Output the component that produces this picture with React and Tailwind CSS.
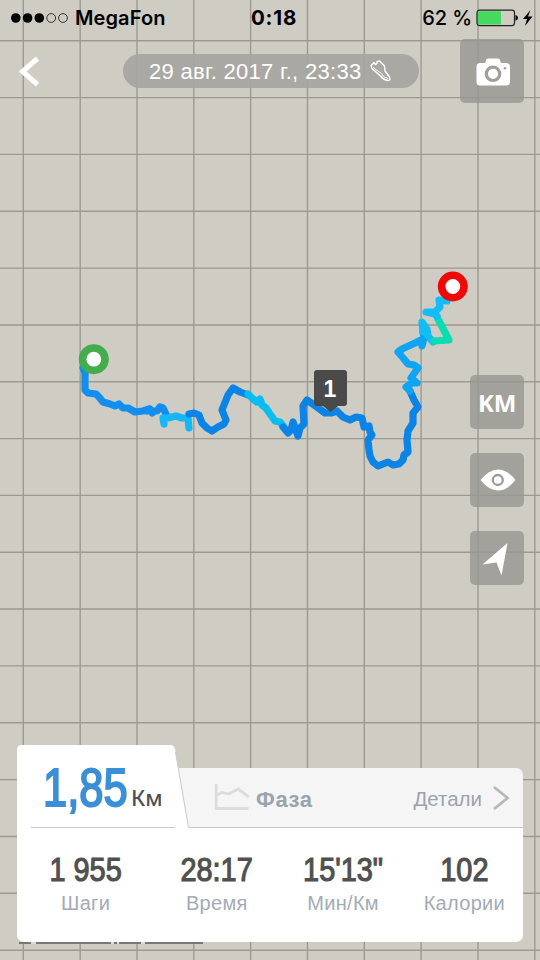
import React from 'react';

// Route pieces, coloured by pace
const route = [
  {
    color: '#128eee',
    points:
      '83,368 85,373 85,390 88,393 96,394 99,397 103,402 110,404 115,406 119,404 123,408 128,408 135,412 143,411 149,409 152,411 157,411 160,407 163,408 166,414',
  },
  { color: '#128eee', points: '147,411 150,409 152,413' },
  {
    color: '#14b8f8',
    points: '164,424 163,418 168,418 172,417 176,416 182,418 188,418 189,428',
  },
  {
    color: '#0b84e6',
    points:
      '189,414 194,413 199,415 202,423 207,428 212,431 218,427 224,424 226,420 222,410 228,395 233,388 240,392 248,395',
  },
  {
    color: '#08bdf0',
    points: '248,394 253,399 257,402 260,399 262,405 266,408 270,414 275,421 280,422 284,427',
  },
  {
    color: '#0b84e6',
    points:
      '283,427 288,433 291,430 293,422 298,436 300,428 304,424 303,406 307,400 317,407 325,413 331,413 337,411 343,417 350,420 356,417 362,418 364,427 369,426 370,432 372,435 368,440 369,450 370,456 373,462 378,466 388,462 393,465 399,464 403,460 404,455 408,452 407,440 408,431 413,423 413,413 418,407 414,400 410,391',
  },
  {
    color: '#0fa5f4',
    points:
      '410,391 406,387 412,383 417,383 411,378 418,368 414,365 408,364 404,359 398,352 402,349 415,343 421,340 422,346 424,338 423,332',
  },
  { color: '#14bcf4', points: '423,332 422,322 427,329 428,336 433,342' },
  { color: '#0cdcb0', points: '434,341 449,340 437,317' },
  { color: '#14bcfa', points: '437,316 435,314 426,312 435,312 440,307 439,300 447,301' },
];

const columns = [23.3, 80.2, 137, 193.8, 250.6, 307.5, 364.3, 421.1, 478, 534.8];
const rows = [
  40.8, 97.6, 154.4, 211.3, 268.1, 325, 381.8, 438.6, 495.4, 552.2, 609, 665.9, 722.7, 779.6,
  836.5, 893.3, 950.2,
];

const stats = [
  { value: '1 955', label: 'Шаги', width: 'w-[136px]' },
  { value: '28:17', label: 'Время', width: 'w-[128px]' },
  { value: '15\'13"', label: 'Мин/Км', width: 'w-[126px]' },
  { value: '102', label: 'Калории', width: 'w-[118px]' },
];

function RouteMap() {
  return (
    <svg className="absolute inset-0" width="540" height="960" viewBox="0 0 540 960" fill="none">
      <rect width="540" height="960" fill="#cfccc3" />
      <g stroke="#9c9991" strokeWidth="1.4">
        {columns.map((x) => (
          <path key={x} d={`M${x} 0V960`} />
        ))}
        {rows.map((y) => (
          <path key={y} d={`M0 ${y}H540`} />
        ))}
      </g>

      {route.map((part) => (
        <polyline
          key={part.points}
          points={part.points}
          stroke={part.color}
          strokeWidth="7.2"
          strokeLinecap="round"
          strokeLinejoin="round"
        />
      ))}

      {/* Start and finish */}
      <circle cx="93.8" cy="359.2" r="11.2" fill="#fff" stroke="#43ac4c" strokeWidth="7.6" />
      <circle cx="452.8" cy="286.5" r="11.2" fill="#fff" stroke="#f00808" strokeWidth="7.6" />

      {/* Kilometre mark */}
      <path
        d="M317 370H344Q347 370 347 373V403Q347 406 344 406H338L330.500 412L323 406H317Q314 406 314 403V373Q314 370 317 370Z"
        fill="#4b4a4a"
      />
      <text
        x="330"
        y="396.500"
        textAnchor="middle"
        fill="#fff"
        fontSize="23"
        fontWeight="700"
        fontFamily="Liberation Sans, sans-serif"
      >
        1
      </text>

      {/* Scale line under the card */}
      <path d="M19 943H203" stroke="#7a7873" strokeWidth="2" />
      <path d="M31 943H36M111 943H114M117 943H119M141 943H145" stroke="#dddad2" strokeWidth="2" />
    </svg>
  );
}

function StatusBar() {
  return (
    <div className="flex h-[35px] items-center pl-[11px] pr-[6px] font-['Inter',sans-serif] text-[20px] font-semibold text-black">
      <svg width="58" height="12" viewBox="0 0 58 12">
        <circle cx="4.800" cy="6" r="4.800" />
        <circle cx="16.600" cy="6" r="4.800" />
        <circle cx="28.300" cy="6" r="4.800" />
        <circle cx="40.200" cy="6" r="4.400" fill="none" stroke="#222" strokeWidth="0.900" />
        <circle cx="52" cy="6" r="4.400" fill="none" stroke="#222" strokeWidth="0.900" />
      </svg>
      <span className="ml-[6px] w-[176px] tracking-[0.1px]">MegaFon</span>
      <span className="mt-px text-[20.500px] font-bold tracking-[0.8px]">0:18</span>
      <span className="ml-auto font-medium tracking-[-0.1px]">62 %</span>
      <svg className="ml-[4px]" width="58" height="20" viewBox="0 0 58 20">
        <rect x="1" y="2.200" width="37.500" height="15.400" rx="2.500" fill="none" stroke="#222" strokeWidth="1.200" />
        <rect x="2" y="3.200" width="23" height="13.400" rx="1" fill="#47d860" />
        <path d="M39.500 7Q42 7.500 42 9.800Q42 12.100 39.500 12.700Z" />
        <path d="M54.500 2L47 11H51L49 18L56.500 8.500H52Z" />
      </svg>
    </div>
  );
}

function Header() {
  return (
    <header className="flex items-start pl-[18px] pr-4 pt-1">
      <svg className="mt-[17px]" width="22" height="32" viewBox="0 0 22 32" fill="none">
        <path d="M19.500 2.500L4.500 15.500L19.500 28.500" stroke="#fff" strokeWidth="5" />
      </svg>
      <div className="ml-[83px] mt-[15px] flex h-[34px] w-[296px] items-center rounded-full bg-[#a5a49f]/90 pl-[26px] text-white">
        <span className="mt-px whitespace-nowrap text-[22px] tracking-[0.3px]">29 авг. 2017 г., 23:33</span>
        <svg className="ml-[9px]" width="22" height="22" viewBox="0 0 22 22" fill="none" stroke="#fff" strokeWidth="1.400" strokeLinejoin="round">
          <path d="M1.200 5.500L4 2.500L5.500 4.500Q7.500 4 7 1.500L9.500 1L14.500 6L15 11L19.500 17Q21 20.500 17.500 20.500Q13.500 20 10.500 16L2.500 9Q.8 7.200 1.200 5.500Z" />
          <path d="M3 7.500L11.500 13.500Q13.500 18 18 18.500" strokeWidth="0.900" />
        </svg>
      </div>
      <button className="ml-auto flex size-16 items-center justify-center rounded-[5px] bg-[#979691]/80">
        <svg className="mt-0.5 ml-0.5" width="34" height="30" viewBox="0 0 34 30">
          <path
            d="M4 6H8Q9 6 9.500 5L10 3Q10.500 1.500 12 1.500H22Q23.500 1.500 24 3L24.500 5Q25 6 26 6H30Q34 6 34 10V25Q34 28.500 30 28.500H4Q.5 28.500 .5 25V10Q.5 6 4 6Z"
            fill="#fff"
          />
          <circle cx="17" cy="16.800" r="6.700" fill="#fff" stroke="#a09f9a" strokeWidth="3.200" />
          <circle cx="29" cy="11.300" r="1.300" fill="#a09f9a" />
        </svg>
      </button>
    </header>
  );
}

function MapControls() {
  const button = 'flex size-[54px] items-center justify-center rounded-[5px] bg-[#979691]/80';

  return (
    <div className="mt-[272px] flex flex-col items-end gap-6 pr-4">
      <button className={button}>
        <span className="mt-0.5 font-['Noto_Sans',sans-serif] text-[24px] font-bold leading-none tracking-[-0.3px] text-white">
          KM
        </span>
      </button>
      <button className={button}>
        <svg className="ml-0.5" width="36" height="22" viewBox="0 0 36 22">
          <path d="M.5 11Q9 .5 18 .5Q27 .5 35.500 11Q27 21.500 18 21.500Q9 21.500 .5 11Z" fill="#fff" />
          <circle cx="17.800" cy="11" r="5" fill="#fff" stroke="#9d9c97" strokeWidth="2.300" />
        </svg>
      </button>
      <button className={button}>
        <svg className="mr-[5px] mt-0.5" width="28" height="34" viewBox="0 0 28 34">
          <path d="M26.500 1L1.500 22.500L15.500 20.500L20.500 33.500Z" fill="#fff" />
        </svg>
      </button>
    </div>
  );
}

function SummaryCard() {
  return (
    <section className="mt-[160px] ml-[17px] w-[506px]">
      <div className="flex h-[83px] items-end">
        {/* Distance tab, slanted on the right */}
        <div className="relative z-10 h-[83px] w-[172px] shrink-0">
          <svg className="absolute inset-0" width="172" height="83" viewBox="0 0 172 83" fill="none">
            <path d="M0 83V5Q0 0 5 0H153Q157 0 158 4L172 83Z" fill="#fff" />
            <path d="M158.500 7L171.500 82.500" stroke="#c8c8c8" strokeWidth="1" />
            <path d="M14 82.700H158" stroke="#c9c9c9" strokeWidth="1.200" />
          </svg>
          <div className="relative flex items-baseline pl-[26px] pt-[13px]">
            <span className="inline-block w-[88px] origin-left scale-x-[0.82] text-[53px] leading-[60px] text-[#3b8fd6] [-webkit-text-stroke:2px_#3b8fd6]">
              1,85
            </span>
            <span className="font-['Noto_Sans',sans-serif] text-[22px] font-medium leading-none text-[#505050]">
              Км
            </span>
          </div>
        </div>
        <div className="-ml-[18px] flex h-[60px] flex-1 items-center rounded-tr-[7px] border-b border-[#c8c8ca] bg-[#f5f5f6] pl-[43px] pr-[12px] pt-1 text-[#9ba3af]">
          <svg className="mb-1" width="36" height="28" viewBox="0 0 36 28" fill="none" stroke="#dadcdd" strokeWidth="2.800">
            <path d="M2.200 0V24.500H34.500" />
            <path d="M2 11.500L8 8.500L15 10L24 5L35 13" />
          </svg>
          <span className="ml-[6px] text-[22px] font-bold tracking-[0.6px]">Фаза</span>
          <span className="ml-auto text-[20.500px]">Детали</span>
          <svg className="ml-2.5 mb-1" width="19" height="26" viewBox="0 0 19 26" fill="none">
            <path d="M2 2L15.500 13L2 24" stroke="#b5b7b9" strokeWidth="2.800" />
          </svg>
        </div>
      </div>

      <div className="flex h-[114px] rounded-b-[7px] bg-white pl-px pt-[22px]">
        {stats.map((stat) => (
          <div key={stat.label} className={`flex flex-col items-center ${stat.width}`}>
            <span className="inline-block scale-x-[0.85] whitespace-nowrap text-[34px] leading-[38px] text-[#505050] [-webkit-text-stroke:1.2px_#505050]">
              {stat.value}
            </span>
            <span className="mt-0.5 text-[20px] leading-[26px] tracking-[0.3px] text-[#a3abb6]">
              {stat.label}
            </span>
          </div>
        ))}
      </div>
    </section>
  );
}

function App() {
  return (
    <div className="relative h-[960px] w-[540px] overflow-hidden font-['Liberation_Sans',sans-serif]">
      <RouteMap />
      <div className="relative">
        <StatusBar />
        <Header />
        <MapControls />
        <SummaryCard />
      </div>
    </div>
  );
}

export default App;
